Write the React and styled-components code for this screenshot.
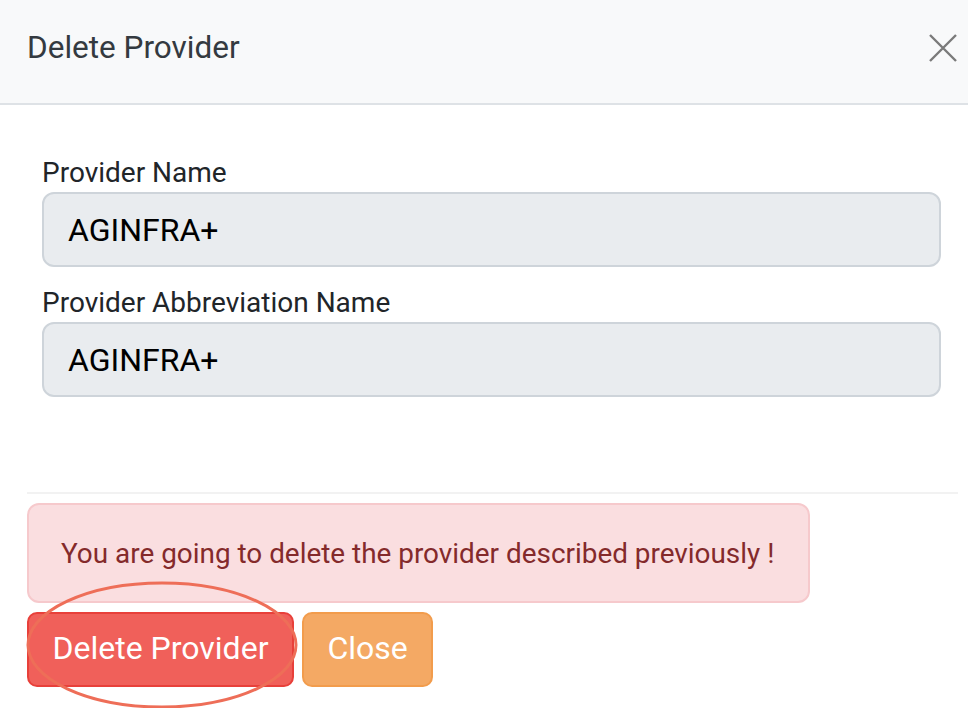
import styled, { createGlobalStyle } from "styled-components"

const GlobalStyle = createGlobalStyle`
  html, body {
    margin: 0;
    padding: 0;
    background: #fff;
    font-family: Roboto, "Liberation Sans", sans-serif;
  }
`

const fields = [
  { label: "Provider Name", value: "AGINFRA+" },
  { label: "Provider Abbreviation Name", value: "AGINFRA+" },
]

export default function App() {
  return (
    <>
      <GlobalStyle />
      <Modal>
        <ModalHeader>
          <Title>Delete Provider</Title>
          <CloseIcon aria-label="close">
            <svg width="30" height="30" viewBox="0 0 30 30">
              <path d="M2 2 L28 28 M28 2 L2 28" stroke="#7a7a7a" strokeWidth="2.4" fill="none" />
            </svg>
          </CloseIcon>
        </ModalHeader>
        <ModalBody>
          {fields.map((f) => (
            <Field key={f.label}>
              <Label>{f.label}</Label>
              <Input value={f.value} readOnly />
            </Field>
          ))}
        </ModalBody>
        <ModalFooter>
          <Alert>You are going to delete the provider described previously !</Alert>
          <ButtonRow>
            <Marked>
              <Button variant="danger">Delete Provider</Button>
              <Ring viewBox="0 0 274 130" width="274" height="130">
                <ellipse cx="137" cy="65" rx="134" ry="62" fill="none" stroke="#ee6e58" strokeWidth="3" />
              </Ring>
            </Marked>
            <Button variant="warning">Close</Button>
          </ButtonRow>
        </ModalFooter>
      </Modal>
    </>
  )
}

const Modal = styled.div`
  width: 968px;
  height: 708px;
  overflow: hidden;
  background: #fff;
`

const ModalHeader = styled.div`
  height: 105px;
  box-sizing: border-box;
  background: #f8f9fa;
  border-bottom: 2px solid #dee2e6;
  display: flex;
  align-items: center;
  justify-content: space-between;
  padding: 0 10px 8px 27px;
`

const Title = styled.h1`
  margin: 0;
  font-size: 31.5px;
  font-weight: 400;
  color: #343a40;
`

const CloseIcon = styled.button`
  border: 0;
  background: transparent;
  padding: 0;
  display: flex;
  cursor: pointer;
`

const ModalBody = styled.div`
  padding: 52px 27px 0 42px;
  height: 387px;
  box-sizing: border-box;
  display: flex;
  flex-direction: column;
  gap: 20px;
`

const Field = styled.div`
  display: flex;
  flex-direction: column;
  gap: 3px;
`

const Label = styled.label`
  font-size: 28px;
  line-height: 32px;
  color: #212529;
`

const Input = styled.input`
  height: 75px;
  box-sizing: border-box;
  border: 2px solid #ced4da;
  border-radius: 12px;
  background: #e9ecef;
  padding: 0 24px;
  font-family: Roboto, "Liberation Sans", sans-serif;
  font-size: 32px;
  color: #000;
  outline: none;
`

const ModalFooter = styled.div`
  margin: 0 10px 0 27px;
  border-top: 2px solid #f2f2f2;
  padding-top: 9px;
  display: flex;
  flex-direction: column;
  gap: 9px;
`

const Alert = styled.div`
  width: 783px;
  height: 100px;
  box-sizing: border-box;
  background: #fadee0;
  border: 2px solid #f6c9cc;
  border-radius: 12px;
  display: flex;
  align-items: center;
  padding: 0 0 0 32px;
  white-space: nowrap;
  font-size: 27.9px;
  color: #842a2b;
`

const ButtonRow = styled.div`
  display: flex;
  gap: 8px;
`

const Marked = styled.div`
  position: relative;
  display: flex;
`

const Ring = styled.svg`
  position: absolute;
  left: -2px;
  top: -32px;
  pointer-events: none;
`

const Button = styled.button`
  height: 75px;
  box-sizing: border-box;
  border-radius: 10px;
  padding: 0 ${(p) => (p.variant === "danger" ? "23.5px" : "23.5px")} 3px;
  font-family: Roboto, "Liberation Sans", sans-serif;
  font-size: 32px;
  color: #fff;
  border: 2px solid ${(p) => (p.variant === "danger" ? "#e8403a" : "#f29c4c")};
  background: ${(p) => (p.variant === "danger" ? "#f0605a" : "#f4a964")};
  cursor: pointer;
`
